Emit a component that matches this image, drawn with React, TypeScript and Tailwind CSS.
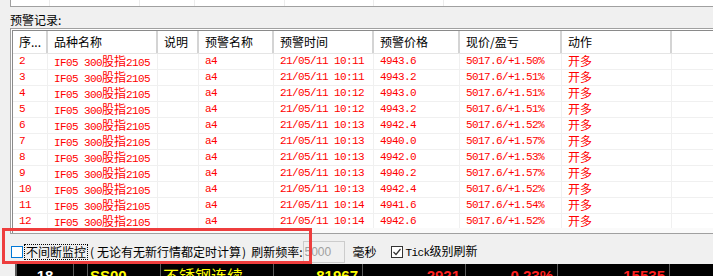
const TOP_COLS = ["w-[39px]", "w-[90px]", "w-[55px]", "w-[90px]", "w-[89px]", "w-[70px]"];

const COLS = [
  "w-[35px]",
  "w-[110px]",
  "w-[41px]",
  "w-[75px]",
  "w-[100px]",
  "w-[86px]",
  "w-[102px]",
  "w-[110px]",
  "w-[120px]",
];

const HEAD = ["序...", "品种名称", "说明", "预警名称", "预警时间", "预警价格", "现价/盈亏", "动作", ""];

const ROWS: [string, string, string, string][] = [
  ["2", "10:11", "4943.6", "+1.50%"],
  ["3", "10:11", "4943.2", "+1.51%"],
  ["4", "10:12", "4943.0", "+1.51%"],
  ["5", "10:12", "4943.2", "+1.51%"],
  ["6", "10:13", "4942.4", "+1.52%"],
  ["7", "10:13", "4940.0", "+1.57%"],
  ["8", "10:13", "4942.0", "+1.53%"],
  ["9", "10:13", "4940.2", "+1.57%"],
  ["10", "10:13", "4942.4", "+1.52%"],
  ["11", "10:14", "4941.6", "+1.54%"],
  ["12", "10:14", "4942.6", "+1.52%"],
];

// SimSun-ish: ascii in a narrow mono, CJK at full 12px width
function Mixed({ text }: { text: string }) {
  const parts = text.split(/([\u4e00-\u9fff]+)/).filter(Boolean);
  return (
    <>
      {parts.map((p, i) =>
        /[\u4e00-\u9fff]/.test(p) ? (
          <span key={i} className="whitespace-pre font-['Noto_Sans_CJK_SC',sans-serif] text-[12px] leading-[14px] tracking-normal">
            {p}
          </span>
        ) : (
          <span key={i} className="whitespace-pre leading-[14px]">
            {p}
          </span>
        ),
      )}
    </>
  );
}

function AlertRow({ row }: { row: [string, string, string, string] }) {
  const [no, time, price, pct] = row;
  const cells = [no, "IF05 300股指2105", "", "a4", `21/05/11 ${time}`, price, `5017.6/${pct}`, "开多", ""];
  return (
    <div className="flex h-[16px] border-b border-[#f0f0f0]">
      {cells.map((c, i) => (
        <div
          key={i}
          className={`${COLS[i]} flex shrink-0 items-baseline border-r border-[#f0f0f0] pl-[6px]`}
        >
          <Mixed text={c} />
        </div>
      ))}
    </div>
  );
}

function Ticker() {
  return (
    <div className="flex h-[12px] overflow-hidden bg-black font-['Liberation_Sans',sans-serif] text-[15px] font-bold leading-[15px]">
      <div className="w-[15px] shrink-0 bg-[#f0f0f0]" />
      <div className="w-[58px] shrink-0 border-l-2 border-[#5a5a5a] pt-[4px] text-center text-white">18</div>
      <div className="w-[14px] shrink-0 border-l border-[#5a5a5a]" />
      <div className="w-[73px] shrink-0 border-l border-[#5a5a5a] pl-[2px] pt-[4px] text-[#ffff00]">SS00</div>
      <div className="w-[113px] shrink-0 border-l border-[#5a5a5a] pl-[2px] pt-[3px] font-['Noto_Sans_CJK_SC',sans-serif] text-[16px] font-normal leading-[16px] text-[#ffff00]">
        不锈钢连续
      </div>
      <div className="w-[89px] shrink-0 border-l border-[#5a5a5a] pr-[4px] pt-[4px] text-right text-[#ffff00]">81967</div>
      <div className="w-[103px] shrink-0 border-l border-[#5a5a5a] pr-[5px] pt-[4px] text-right text-[#ff2020]">2921</div>
      <div className="w-[92px] shrink-0 border-l border-[#5a5a5a] pr-[4px] pt-[4px] text-right text-[#ff2020]">0.23%</div>
      <div className="w-[112px] shrink-0 border-l border-[#5a5a5a] pr-[4px] pt-[4px] text-right text-[#ff2020]">15535</div>
      <div className="flex-1 border-l border-[#5a5a5a]" />
    </div>
  );
}

export default function App() {
  return (
    <div className="relative h-[276px] w-[713px] overflow-hidden bg-[#f0f0f0] font-['Noto_Sans_CJK_SC',sans-serif] text-[12px] text-black">
      {/* tail of the list above */}
      <div className="ml-[10px] flex h-[7px] border-b border-l border-[#a0a0a0] bg-white">
        {TOP_COLS.map((w, i) => (
          <div key={i} className={`${w} shrink-0 border-r border-[#ececec]`} />
        ))}
      </div>

      <div className="h-[21px] pl-[10px] pt-[4px] leading-[17px]">预警记录:</div>

      <div className="ml-[10px] border-y border-l border-[#a0a0a0] bg-white pl-px pt-px">
        <div className="border-l border-t border-[#8a8a8a]">
          <div className="flex h-[23px] border-b border-[#e5e5e5] bg-white">
            {HEAD.map((h, i) => (
              <div
                key={i}
                className={`${COLS[i]} shrink-0 overflow-hidden whitespace-nowrap border-r-2 border-[#d4d4d4] pl-[6px] leading-[22px]`}
              >
                {h}
              </div>
            ))}
          </div>
          <div className="h-[174px] overflow-hidden font-['Liberation_Mono',monospace] text-[11px] tracking-[-0.6px] text-[#ff0000]">
            {ROWS.map((r) => (
              <AlertRow key={r[0]} row={r} />
            ))}
          </div>
          <div className="h-[5px] bg-[#fafafa]" />
        </div>
      </div>

      <div className="h-[30px] pt-[7px]">
        <div className="flex h-[22px] items-center pl-[11px] leading-[14px]">
          <span className="h-[12px] w-[12px] shrink-0 border border-[#0078d7] bg-white" />
          <span className="ml-[1px] border border-dotted border-black pl-px pr-[1px]">不间断监控</span>
          <span className="ml-[2px] mr-[3px]">(</span>
          <span className="whitespace-nowrap">无论有无新行情都定时计算</span>
          <span className="ml-[1px] mr-[5px]">)</span>
          <span className="whitespace-nowrap">刷新频率:</span>
          <div className="flex h-[22px] w-[42px] shrink-0 items-center border border-[#cccccc] bg-[#f0f0f0] pl-[1px] font-['Liberation_Sans',sans-serif] text-[12px] text-[#a0a0a0]">
            5000
          </div>
          <span className="ml-[8px]">毫秒</span>
          <span className="ml-[14px] flex h-[12px] w-[12px] shrink-0 items-center justify-center border border-[#333333] bg-white">
            <svg width="10" height="10" viewBox="0 0 10 10">
              <path d="M1.5 5 L4 7.5 L8.5 2" fill="none" stroke="#333333" strokeWidth="1.2" />
            </svg>
          </span>
          <span className="ml-[3px] whitespace-nowrap">
            <span className="font-['Liberation_Mono',monospace] text-[11px] tracking-[-0.6px]">Tick</span>级别刷新
          </span>
        </div>
      </div>

      <Ticker />

      {/* annotation box drawn over the screenshot */}
      <div className="absolute left-[2px] top-[228px] h-[36px] w-[310px] border-[3px] border-[#ee3d3d]" />
    </div>
  );
}
